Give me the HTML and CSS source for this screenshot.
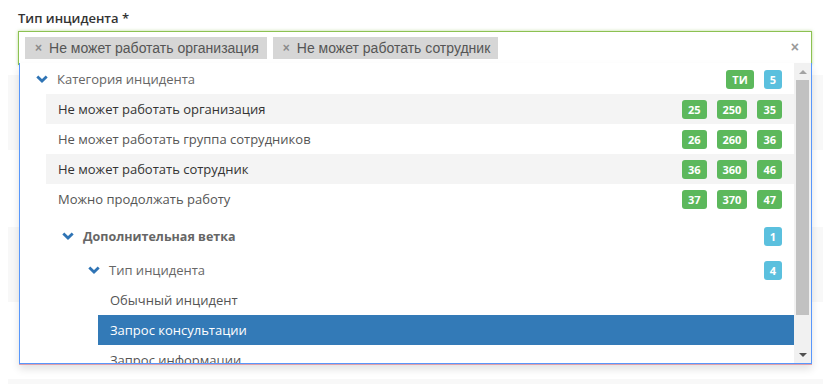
FILE: index.html
```html
<!DOCTYPE html>
<html lang="ru">
<head>
    <meta charset="UTF-8">
    <meta name="viewport" content="width=device-width, initial-scale=1.0">
    <title>Тип инцидента</title>
    <link rel="stylesheet" href="styles.css">
</head>
<body>
    <div class="page">
        <div class="field">
            <label class="field-label">Тип инцидента *</label>
            <div class="select">
                <ul class="tags">
                    <li class="tag"><span class="tag-remove">×</span>Не может работать организация</li>
                    <li class="tag"><span class="tag-remove">×</span>Не может работать сотрудник</li>
                </ul>
                <span class="select-clear">×</span>

                <!-- Dropdown -->
                <div class="dropdown">
                    <div class="options">
                        <div class="group">
                            <div class="group-head">
                                <svg class="chevron" viewBox="0 0 12 8"><polyline points="1.3,1.4 6,6 10.7,1.4"/></svg>
                                <span class="group-name">Категория инцидента</span>
                                <span class="badges"><span class="badge green">ТИ</span><span class="badge blue">5</span></span>
                            </div>
                            <ul class="group-list">
                                <li class="option selected">Не может работать организация
                                    <span class="badges"><span class="badge green">25</span><span class="badge green">250</span><span class="badge green">35</span></span>
                                </li>
                                <li class="option">Не может работать группа сотрудников
                                    <span class="badges"><span class="badge green">26</span><span class="badge green">260</span><span class="badge green">36</span></span>
                                </li>
                                <li class="option selected">Не может работать сотрудник
                                    <span class="badges"><span class="badge green">36</span><span class="badge green">360</span><span class="badge green">46</span></span>
                                </li>
                                <li class="option">Можно продолжать работу
                                    <span class="badges"><span class="badge green">37</span><span class="badge green">370</span><span class="badge green">47</span></span>
                                </li>
                                <li class="group branch">
                                    <div class="group-head">
                                        <svg class="chevron" viewBox="0 0 12 8"><polyline points="1.3,1.4 6,6 10.7,1.4"/></svg>
                                        <span class="group-name bold">Дополнительная ветка</span>
                                        <span class="badges"><span class="badge blue">1</span></span>
                                    </div>
                                    <ul class="group-list">
                                        <li class="group sub">
                                            <div class="group-head">
                                                <svg class="chevron" viewBox="0 0 12 8"><polyline points="1.3,1.4 6,6 10.7,1.4"/></svg>
                                                <span class="group-name">Тип инцидента</span>
                                                <span class="badges"><span class="badge blue">4</span></span>
                                            </div>
                                            <ul class="group-list">
                                                <li class="option">Обычный инцидент</li>
                                                <li class="option active">Запрос консультации</li>
                                                <li class="option">Запрос информации</li>
                                            </ul>
                                        </li>
                                    </ul>
                                </li>
                            </ul>
                        </div>
                    </div>
                    <div class="scrollbar">
                        <span class="arrow up"></span>
                        <div class="track"><div class="thumb"></div></div>
                        <span class="arrow down"></span>
                    </div>
                </div>
            </div>
        </div>

        <!-- Page rows behind the dropdown -->
        <div class="rows">
            <div class="row-band"></div>
            <div class="row-band"></div>
            <div class="row-band last"></div>
        </div>
    </div>
</body>
</html>
```

FILE: styles.css
```css
/* Basic reset */
* {
    box-sizing: border-box;
    margin: 0;
    padding: 0;
}

body {
    background-color: #ffffff;
    font-family: "Open Sans", Arial, sans-serif;
    color: #333;
    overflow: hidden;
}

ul {
    list-style: none;
}

.page {
    position: relative;
    width: 830px;
    height: 384px;
    overflow: hidden;
}

/* Field */
.field {
    position: relative;
    z-index: 2;
    padding: 9px 18px 0;
}

.field-label {
    display: block;
    height: 18px;
    margin-bottom: 4px;
    font-size: 13px;
    font-weight: 600;
    line-height: 18px;
    color: #333;
}

.select {
    position: relative;
    width: 794px;
    height: 34px;
    padding: 5px 6px 0;
    border: 1px solid #8cc152;
    background-color: #ffffff;
    box-shadow: 0 0 3px rgba(140, 193, 82, 0.6);
}

.tags {
    display: flex;
    gap: 6px;
}

.tag {
    display: flex;
    align-items: center;
    height: 22px;
    padding: 0 8px 0 10px;
    background-color: #d6d6d6;
    font-family: "Liberation Sans", Arial, sans-serif;
    font-size: 14px;
    color: #555;
}

.tag-remove {
    margin-right: 7px;
    font-size: 12px;
    font-weight: bold;
    color: #8a8a8a;
}

.select-clear {
    position: absolute;
    top: 7px;
    right: 12px;
    font-family: "Liberation Sans", Arial, sans-serif;
    font-size: 14px;
    font-weight: bold;
    color: #999;
}

/* Dropdown */
.dropdown {
    position: absolute;
    top: 31px;
    left: 0;
    display: flex;
    width: 793px;
    height: 301px;
    border: 1px solid #5897fb;
    border-top: none;
    background-color: #ffffff;
    box-shadow: 0 1px 0 #e0a0aa, 0 5px 8px rgba(0, 0, 0, 0.12);
}

.options {
    flex: 1;
    overflow: hidden;
    padding-top: 1px;
}

.group-head,
.option {
    display: flex;
    align-items: center;
    height: 30px;
    padding-right: 12px;
    font-size: 13px;
}

.group-head {
    padding-left: 16px;
    color: #666;
}

.option {
    padding-left: 12px;
    color: #555;
}

.option.selected {
    background-color: #f4f4f4;
    color: #333;
}

.option.active {
    background-color: #337ab7;
    color: #ffffff;
}

.group-list {
    margin-left: 26px;
}

.branch {
    margin-top: 7px;
}

.sub {
    margin-top: 4px;
}

.chevron {
    flex: none;
    width: 12px;
    height: 8px;
    margin-right: 9px;
    fill: none;
    stroke: #2f74b5;
    stroke-width: 2.8;
}

.group-name.bold {
    font-size: 12.5px;
    font-weight: bold;
    color: #666;
}

/* Badges */
.badges {
    display: flex;
    gap: 10px;
    margin-left: auto;
}

.badge {
    height: 19px;
    padding: 0 6px;
    border-radius: 3px;
    font-size: 11px;
    font-weight: bold;
    line-height: 19px;
    color: #ffffff;
}

.badge.green {
    background-color: #5cb85c;
}

.badge.blue {
    background-color: #5bc0de;
}

/* Scrollbar */
.scrollbar {
    display: flex;
    flex-direction: column;
    width: 17px;
    background-color: #f1f1f1;
}

.arrow {
    display: flex;
    justify-content: center;
    align-items: center;
    height: 17px;
}

.arrow::before {
    content: "";
    border-left: 4px solid transparent;
    border-right: 4px solid transparent;
}

.arrow.up::before {
    border-bottom: 4px solid #a3a3a3;
}

.arrow.down::before {
    border-top: 4px solid #505050;
}

.track {
    flex: 1;
    padding: 0 2px 31px;
}

.thumb {
    height: 100%;
    background-color: #c1c1c1;
}

/* Background rows */
.rows {
    display: flex;
    flex-direction: column;
    gap: 77px;
    margin: 10px 7px 0 8px;
}

.row-band {
    height: 75px;
    background-color: #f8f8f8;
}

.row-band.last {
    height: 7px;
}
```
